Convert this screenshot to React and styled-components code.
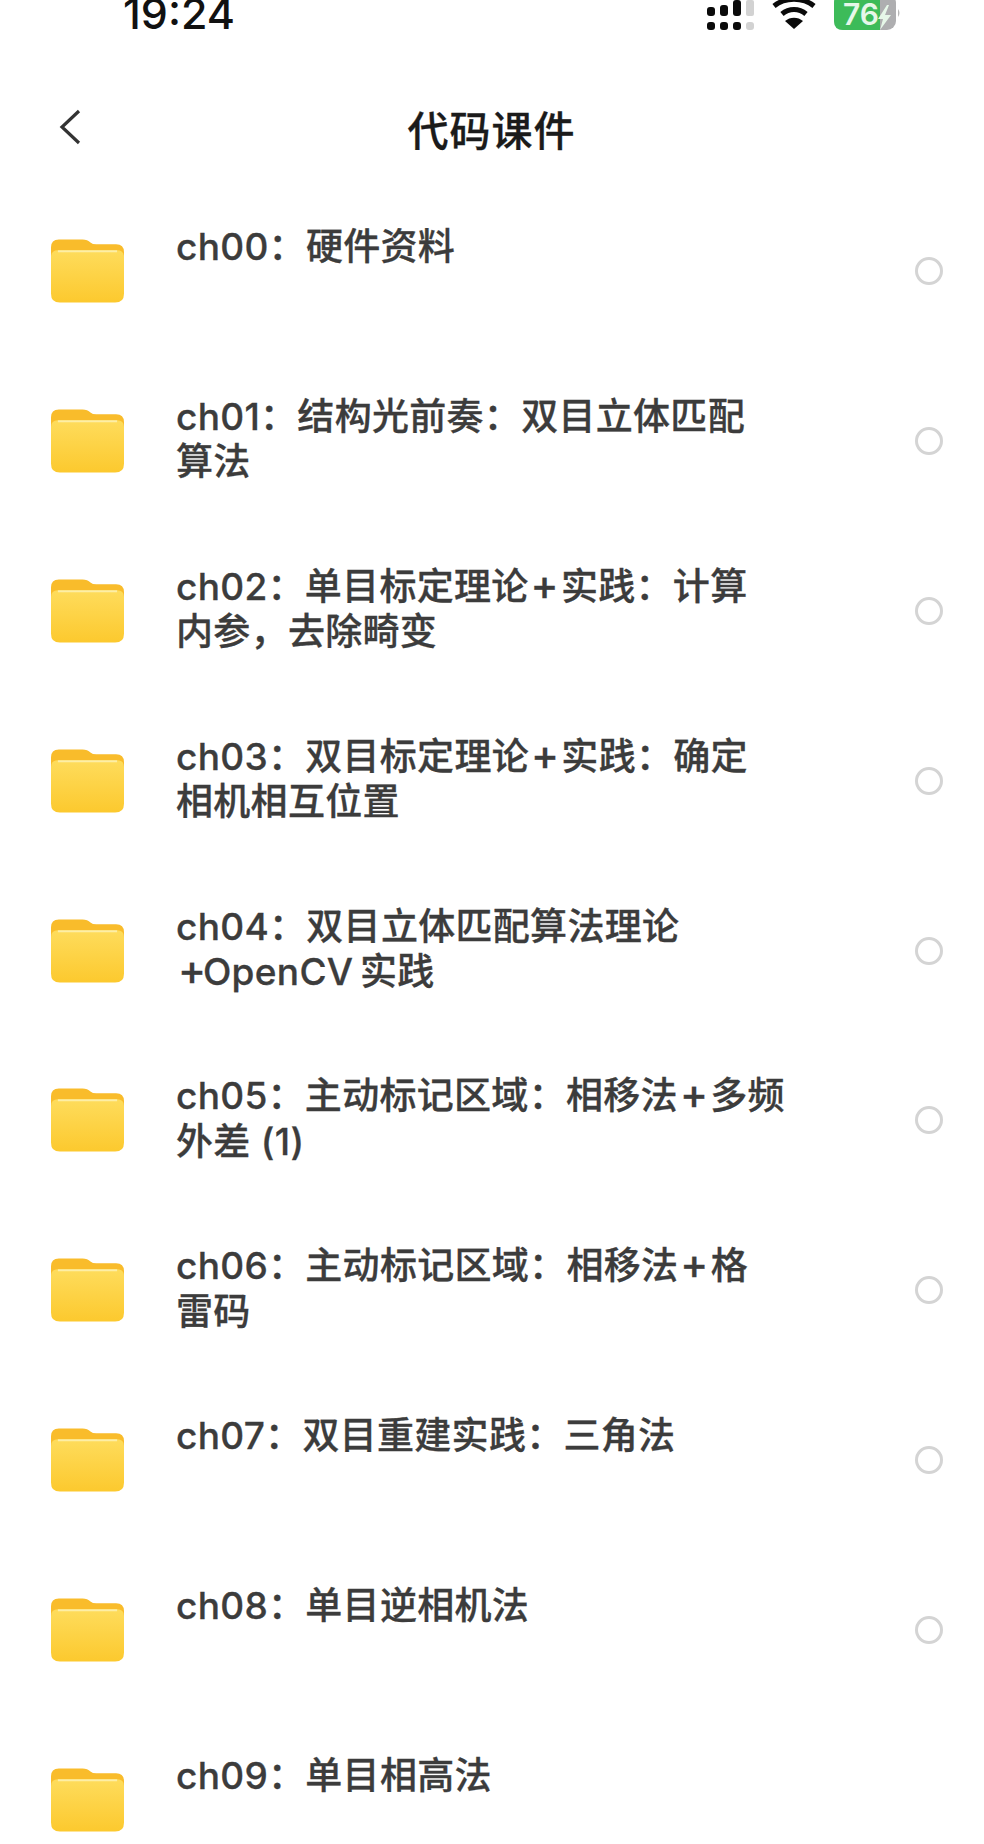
import styled, { createGlobalStyle } from 'styled-components'

const GlobalStyle = createGlobalStyle`
  html, body {
    margin: 0;
    padding: 0;
    background: #fff;
  }
`

const Page = styled.div`
  width: 984px;
  height: 1844px;
  overflow: hidden;
  background: #fff;
  font-family: Inter, "Noto Sans CJK SC", sans-serif;
`

const StatusBar = styled.div`
  height: 32px;
  overflow: hidden;
  display: flex;
  align-items: flex-start;
  padding: 0 82px 0 123px;
`

const Time = styled.div`
  font-size: 43px;
  line-height: 44px;
  margin-top: -9px;
  font-weight: 500;
  color: #111;
`

const StatusIcons = styled.div`
  margin-left: auto;
  display: flex;
  align-items: flex-start;
  gap: 18px;
`

const NavBar = styled.div`
  height: 154px;
  display: grid;
  grid-template-columns: 1fr auto 1fr;
  align-items: flex-start;
  padding-left: 58px;
  padding-right: 59px;
`

const BackIcon = styled.svg`
  width: 24px;
  height: 36px;
  margin-top: 77px;
  display: block;
`

const Title = styled.h1`
  margin: 73px 0 0;
  font-size: 41px;
  line-height: 52px;
  font-weight: 500;
  letter-spacing: 1px;
  color: #1b1b1b;
  -webkit-text-stroke: 0.3px #1b1b1b;
`

const Row = styled.div`
  height: 169.9px;
  flex-shrink: 0;
  display: grid;
  grid-template-columns: 73px 1fr 28px;
  column-gap: 52px;
  align-items: center;
  padding: 0 41px 0 51px;
`

const Label = styled.div`
  align-self: flex-start;
  padding-top: 38px;
  font-size: 37px;
  line-height: 45.5px;
  font-weight: 500;
  letter-spacing: 0.3px;
  color: #3c3c3c;
  white-space: nowrap;
  -webkit-text-stroke: 0.3px #3c3c3c;
`

const Plus = styled.span`
  font-size: 42px;
  line-height: 0;
  padding: 0 2px;
  margin-right: ${(props) => (props.$lead ? '-5.4px' : '0')};
`

const Radio = styled.div`
  width: 28px;
  height: 28px;
  box-sizing: border-box;
  border: 3px solid #d4d4d4;
  border-radius: 50%;
`

const rows = [
  { lines: ['ch00：硬件资料'], radio: true },
  { lines: ['ch01：结构光前奏：双目立体匹配', '算法'], radio: true },
  { lines: ['ch02：单目标定理论+实践：计算', '内参，去除畸变'], radio: true },
  { lines: ['ch03：双目标定理论+实践：确定', '相机相互位置'], radio: true },
  { lines: ['ch04：双目立体匹配算法理论', '+OpenCV\u2009实践'], radio: true },
  { lines: ['ch05：主动标记区域：相移法+多频', '外差 (1)'], radio: true },
  { lines: ['ch06：主动标记区域：相移法+格', '雷码'], radio: true },
  { lines: ['ch07：双目重建实践：三角法'], radio: true },
  { lines: ['ch08：单目逆相机法'], radio: true },
  { lines: ['ch09：单目相高法'], radio: false },
]

function SignalIcon() {
  return (
    <svg width="47" height="32" viewBox="0 0 47 32">
      <rect x="0" y="7" width="8" height="9" rx="3" fill="#0a0a0a" />
      <rect x="13" y="5" width="8" height="11" rx="3" fill="#0a0a0a" />
      <rect x="26" y="0" width="8" height="16" rx="3" fill="#0a0a0a" />
      <rect x="39" y="0" width="8" height="16" rx="2" fill="#d2d2d2" />
      <rect x="0" y="22" width="8" height="8" rx="3" fill="#0a0a0a" />
      <rect x="13" y="22" width="8" height="8" rx="3" fill="#0a0a0a" />
      <rect x="26" y="22" width="8" height="8" rx="3" fill="#0a0a0a" />
      <rect x="39" y="22" width="8" height="8" rx="3" fill="#d2d2d2" />
    </svg>
  )
}

function WifiIcon() {
  return (
    <svg width="44" height="32" viewBox="0 0 44 32">
      <path d="M2 6 C13 -3 31 -3 42 6" fill="none" stroke="#0a0a0a" strokeWidth="5" />
      <path d="M10 14 C17 8 27 8 34 14" fill="none" stroke="#0a0a0a" strokeWidth="5" />
      <path d="M13 21 L22 29 L31 21 C26 16.5 18 16.5 13 21 Z" fill="#0a0a0a" />
    </svg>
  )
}

function BatteryIcon() {
  return (
    <svg width="68" height="32" viewBox="0 0 68 32">
      <rect x="0" y="-6" width="62" height="36" rx="9" fill="#aeaeb0" />
      <path d="M0 3 Q0 -6 9 -6 L46 -6 L46 30 L9 30 Q0 30 0 21 Z" fill="#3dbb59" />
      <path d="M64 9 Q67 13 64 17 Z" fill="#b8b8b8" />
      <text x="9" y="25" fontFamily="Inter, sans-serif" fontSize="30" fontWeight="600" fill="#e6f7e8">76</text>
      <path d="M53 5 L44 19 L49 19 L46 30 L57 15 L51 15 L55 5 Z" fill="#e6f7e8" />
    </svg>
  )
}

function FolderIcon() {
  return (
    <svg width="73" height="66" viewBox="0 0 74 66">
      <defs>
        <linearGradient id="folderFront" x1="0" y1="0" x2="0" y2="1">
          <stop offset="0" stopColor="#fedc5c" />
          <stop offset="1" stopColor="#fcc92e" />
        </linearGradient>
      </defs>
      <path d="M0 9 Q0 1 8 1 L32 1 Q37 1 40 4 Q42 6 46 6 L66 6 Q74 6 74 14 L74 30 L0 30 Z" fill="#f9bc2b" />
      <path d="M0 19 Q0 12 7 12 L67 12 Q74 12 74 19 L74 56 Q74 65 65 65 L9 65 Q0 65 0 56 Z" fill="url(#folderFront)" />
      <rect x="7" y="12" width="60" height="2" fill="#fdeea6" />
    </svg>
  )
}

// the plus sign is narrower than a full-width CJK cell in the original
function LabelLine({ text }) {
  const parts = text.split('+')
  return (
    <div>
      {parts.map((part, i) => (
        <span key={i}>
          {i > 0 && <Plus $lead={i === 1 && parts[0] === ''}>+</Plus>}
          {part}
        </span>
      ))}
    </div>
  )
}

function App() {
  return (
    <Page>
      <GlobalStyle />
      <StatusBar>
        <Time>19:24</Time>
        <StatusIcons>
          <SignalIcon />
          <WifiIcon />
          <BatteryIcon />
        </StatusIcons>
      </StatusBar>
      <NavBar>
        <BackIcon viewBox="0 0 24 36">
          <path d="M21 2 L4 18 L21 34" fill="none" stroke="#333" strokeWidth="3.2" />
        </BackIcon>
        <Title>代码课件</Title>
      </NavBar>
      {rows.map((row) => (
        <Row key={row.lines[0]}>
          <FolderIcon />
          <Label>
            {row.lines.map((line) => (
              <LabelLine key={line} text={line} />
            ))}
          </Label>
          {row.radio && <Radio />}
        </Row>
      ))}
    </Page>
  )
}

export default App
